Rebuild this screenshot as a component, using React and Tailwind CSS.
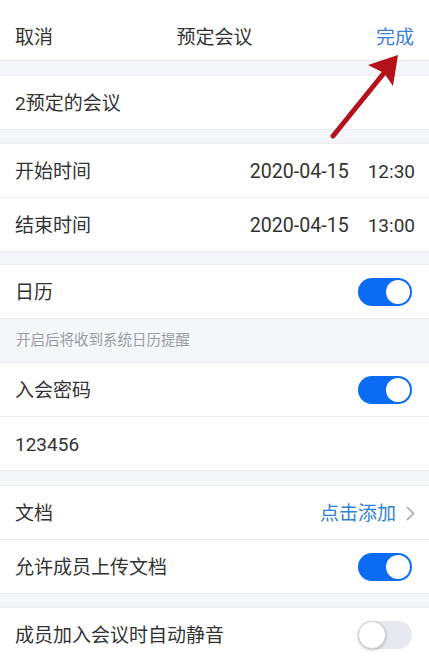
const FONT = { fontFamily: 'Roboto, "Noto Sans CJK SC", sans-serif' };

function Toggle({ on }) {
  if (on) {
    return (
      <div className="w-[54px] h-[28px] rounded-full bg-[#0b6cf3] flex items-center justify-end p-[2px]">
        <div className="w-[24px] h-[24px] rounded-full bg-white" />
      </div>
    );
  }
  return (
    <div className="w-[54px] h-[28px] rounded-full bg-[#e8e9ee] flex items-center justify-start">
      <div className="w-[28px] h-[28px] rounded-full bg-white border border-[#d4d4d8] shadow-[0_1px_3px_rgba(0,0,0,0.25)]" />
    </div>
  );
}

function Row({ label, children, last }) {
  return (
    <div className={`h-[54px] bg-white flex items-center justify-between pl-[15px] pr-[17px] ${last ? '' : 'border-b border-[#ebedf0]'}`}>
      <span className="text-[19px] text-[#333] leading-none pt-[2px]">{label}</span>
      {children}
    </div>
  );
}

function Gap({ h = 'h-[14px]' }) {
  return <div className={`${h} bg-[#f4f6f9] border-b border-[#ebedf0]`} />;
}

export default function App() {
  return (
    <div className="relative w-[429px] h-[661px] overflow-hidden bg-[#f4f6f9]" style={FONT}>
      {/* Header */}
      <div className="h-[61px] bg-white border-b border-[#e6e8eb] grid grid-cols-[1fr_auto_1fr] items-center px-[15px] pt-[14px]">
        <span className="text-[19px] text-[#333] leading-none">取消</span>
        <span className="text-[19px] text-[#333] leading-none">预定会议</span>
        <span className="text-[19px] text-[#3a80d6] leading-none text-right">完成</span>
      </div>

      <div className="h-[14px]" />
      <div className="border-t border-[#ebedf0]" />
      <Row label="2预定的会议" />

      <Gap h="h-[14px]" />
      <Row label="开始时间">
        <div className="flex items-center gap-[19px] text-[19px] text-[#333] leading-none -mr-[3px] pt-[2px]">
          <span className="text-[19.6px]">2020-04-15</span>
          <span>12:30</span>
        </div>
      </Row>
      <Row label="结束时间">
        <div className="flex items-center gap-[19px] text-[19px] text-[#333] leading-none -mr-[3px] pt-[2px]">
          <span className="text-[19.6px]">2020-04-15</span>
          <span>13:00</span>
        </div>
      </Row>

      <Gap h="h-[13px]" />
      <Row label="日历">
        <Toggle on />
      </Row>
      <div className="h-[44px] flex items-center px-[16px] border-b border-[#ebedf0]">
        <span className="text-[14.5px] text-[#9a9da3] leading-none pt-[2px]">开启后将收到系统日历提醒</span>
      </div>
      <Row label="入会密码">
        <Toggle on />
      </Row>
      <Row label="123456" />

      <Gap h="h-[15px]" />
      <Row label="文档">
        <div className="flex items-center gap-[10px] -mr-[3px] pt-[2px]">
          <span className="text-[19px] text-[#2f7fd6] leading-none">点击添加</span>
          <svg width="9" height="15" viewBox="0 0 9 15" fill="none">
            <path d="M1.5 1.5 L7.5 7.5 L1.5 13.5" stroke="#a3a6ab" strokeWidth="1.6" strokeLinecap="round" strokeLinejoin="round" />
          </svg>
        </div>
      </Row>
      <Row label="允许成员上传文档">
        <Toggle on />
      </Row>

      <Gap h="h-[14px]" />
      <Row label="成员加入会议时自动静音">
        <Toggle />
      </Row>

      {/* annotation arrow */}
      <svg className="absolute left-0 top-0 pointer-events-none" width="429" height="661" viewBox="0 0 429 661">
        <line x1="333" y1="136" x2="384" y2="73" stroke="#b3121c" strokeWidth="5" strokeLinecap="round" />
        <polygon points="398,55 368,65 384,73 393,86" fill="#b3121c" />
      </svg>
    </div>
  );
}
